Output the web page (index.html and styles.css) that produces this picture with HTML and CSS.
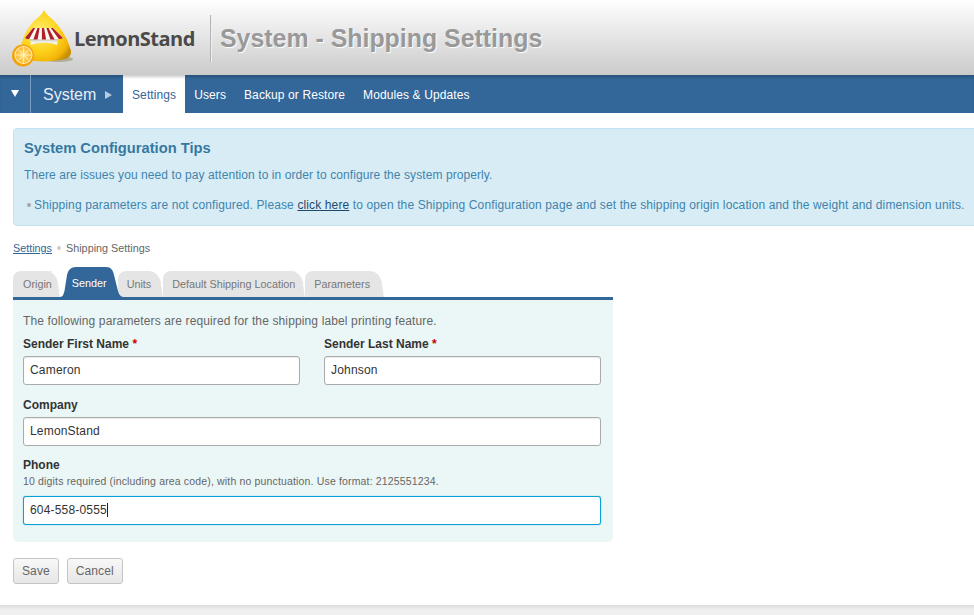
FILE: index.html
```html
<!DOCTYPE html>
<html lang="en">
<head>
  <meta charset="UTF-8">
  <meta name="viewport" content="width=device-width, initial-scale=1.0">
  <title>System - Shipping Settings</title>
  <link rel="stylesheet" href="styles.css">
</head>
<body>

  <div class="header">
    <div class="logo">
      <svg class="logo-icon" width="75" height="68" viewBox="0 3 75 68">
        <defs>
          <radialGradient id="dome" cx="0.38" cy="0.42" r="0.7">
            <stop offset="0" stop-color="#fff06a"/>
            <stop offset="0.55" stop-color="#fdd21c"/>
            <stop offset="0.85" stop-color="#f3b508"/>
            <stop offset="1" stop-color="#c78f04"/>
          </radialGradient>
          <linearGradient id="awning" x1="0" y1="0" x2="0" y2="1">
            <stop offset="0" stop-color="#a9a99c"/>
            <stop offset="0.5" stop-color="#e8e8e0"/>
            <stop offset="1" stop-color="#fff"/>
          </linearGradient>
          <radialGradient id="lemon" cx="0.5" cy="0.5" r="0.55">
            <stop offset="0" stop-color="#ffe48a"/>
            <stop offset="1" stop-color="#f9b72a"/>
          </radialGradient>
        </defs>
        <ellipse cx="58" cy="58" rx="15" ry="3" fill="#8f8a62" opacity="0.55"/>
        <path d="M44 9 C46 14 52 17 56 22 C62 29 68 38 71 50 C71.5 54 69 57 65 58 C52 61 38 61 28 59 C23 58 21 55 21 50 C21 38 27 28 33 21 C37 17 42 14 44 9 Z" fill="url(#dome)"/>
        <path d="M30 37 H58 L57 44 C50 41 38 41 31 44 Z" fill="url(#awning)"/>
        <path d="M33 27 H53 L63 37 C61 39 27 39 25 37 Z" fill="#fbf8ec"/>
        <path d="M33 27 H35.200 L29.200 38 C27.500 38.300 26 38 25 37 Z M37.400 27 H39.600 L37.600 38.500 H33.400 Z M41.900 27 H44.100 L46.100 38.500 H41.900 Z M46.400 27 H48.600 L54.600 38.500 H50.400 Z M50.800 27 H53 L63 37 C62 38 60.500 38.300 58.800 38 Z" fill="#b11f2d"/>
        <circle cx="23" cy="54.500" r="11" fill="#f4a20b"/>
        <circle cx="23.500" cy="54" r="9" fill="#fff3c4"/>
        <circle cx="23.500" cy="54" r="8" fill="url(#lemon)"/>
        <path d="M23.500 46 V62 M15.500 54 H31.500 M17.800 48.300 L29.200 59.700 M29.200 48.300 L17.800 59.700" stroke="#fff3c4" stroke-width="0.8"/>
      </svg>
      <span class="logo-text">LemonStand</span>
    </div>
    <span class="header-sep"></span>
    <h1 class="page-title">System - Shipping Settings</h1>
  </div>

  <div class="nav">
    <a class="nav-toggle"><span class="arrow-down"></span></a>
    <span class="nav-section">System <span class="arrow-right"></span></span>
    <a class="nav-item active">Settings</a>
    <a class="nav-item">Users</a>
    <a class="nav-item">Backup or Restore</a>
    <a class="nav-item">Modules &amp; Updates</a>
  </div>

  <div class="content">
    <div class="tips">
      <h2>System Configuration Tips</h2>
      <p class="tip-intro">There are issues you need to pay attention to in order to configure the system properly.</p>
      <p class="tip-item"><span class="dot"></span>Shipping parameters are not configured. Please <a href="#">click here</a> to open the Shipping Configuration page and set the shipping origin location and the weight and dimension units.</p>
    </div>

    <div class="breadcrumbs">
      <a href="#">Settings</a><span class="dot"></span>Shipping Settings
    </div>

    <div class="tabs">
      <a class="tab tab-origin">Origin</a>
      <a class="tab tab-sender current">
        <svg class="tab-shape" width="64" height="30" viewBox="0 0 64 30">
          <path d="M0 30 C3 30 3.500 27 4.500 24 L7 8 C8 3 11 0 16 0 H46 C51 0 53 3 54 8 L58 24 C59 28 61 30 64 30 Z" fill="#336699"/>
        </svg>
        Sender
      </a>
      <a class="tab tab-units">Units</a>
      <a class="tab tab-location">Default Shipping Location</a>
      <a class="tab tab-params">Parameters</a>
    </div>

    <div class="panel">
      <p class="panel-intro">The following parameters are required for the shipping label printing feature.</p>
      <div class="form-row">
        <div class="field">
          <label>Sender First Name <span class="req">*</span></label>
          <div class="input">Cameron</div>
        </div>
        <div class="field">
          <label>Sender Last Name <span class="req">*</span></label>
          <div class="input">Johnson</div>
        </div>
      </div>
      <div class="field company">
        <label>Company</label>
        <div class="input">LemonStand</div>
      </div>
      <div class="field phone">
        <label>Phone</label>
        <div class="hint">10 digits required (including area code), with no punctuation. Use format: 2125551234.</div>
        <div class="input focused">604-558-0555<span class="caret"></span></div>
      </div>
    </div>

    <div class="buttons">
      <button>Save</button>
      <button>Cancel</button>
    </div>
  </div>

  <div class="footer"></div>

</body>
</html>
```

FILE: styles.css
```css
html, body {
  height: 615px;
  overflow: hidden;
}

body {
  margin: 0;
  background-color: #fff;
  font-family: "Liberation Sans", Arial, sans-serif;
  font-size: 12px;
  color: #666;
}

/* header */

.header {
  height: 75px;
  display: flex;
  align-items: center;
  background: linear-gradient(#fff, #f4f4f4 20%, #cbcbcb);
}

.logo {
  width: 210px;
  display: flex;
  align-items: center;
}

.logo-icon {
  flex: none;
}

.logo-text {
  margin: 2px 0 0 -1px;
  font-family: "Open Sans", sans-serif;
  font-size: 20px;
  font-weight: 700;
  letter-spacing: -0.5px;
  color: #4a4a4a;
}

.header-sep {
  width: 1px;
  height: 47px;
  margin-top: 1px;
  background-color: #b5b5b5;
  box-shadow: 1px 0 0 #eee;
}

.page-title {
  margin: 2px 0 0 9px;
  font-size: 24.9px;
  font-weight: bold;
  color: #999;
  text-shadow: 1px 1px 1px #fff;
}

/* nav */

.nav {
  height: 38px;
  display: flex;
  align-items: stretch;
  background-color: #336699;
  box-shadow: inset 0 3px 3px -1px rgba(0, 0, 0, 0.2);
  color: #fff;
}

.nav-toggle {
  width: 30px;
  border-right: 1px solid #7a9cc0;
  display: flex;
  align-items: center;
  justify-content: center;
}

.arrow-down {
  width: 0;
  height: 0;
  border-left: 4px solid transparent;
  border-right: 4px solid transparent;
  border-top: 7px solid #fff;
  margin-bottom: 2px;
}

.nav-section {
  width: 92px;
  box-sizing: border-box;
  display: flex;
  align-items: center;
  padding: 1px 0 0 12px;
  font-size: 16px;
  color: #e8eef5;
}

.arrow-right {
  width: 0;
  height: 0;
  margin-left: 9px;
  border-top: 4px solid transparent;
  border-bottom: 4px solid transparent;
  border-left: 7px solid #b7cbe0;
}

.nav-item {
  display: flex;
  align-items: center;
  padding: 2px 9px 0;
  letter-spacing: 0.1px;
}

.nav-item.active {
  background-color: #fff;
  box-shadow: inset 0 4px 3px -2px rgba(0, 0, 0, 0.2);
  color: #336699;
}

/* content */

.content {
  padding: 15px 13px 0;
}

.tips {
  height: 96px;
  margin-right: -30px;
  background-color: #d8ecf6;
  border: 1px solid #bfe3f0;
  border-radius: 4px;
  padding: 0 10px;
  color: #3f84ac;
}

.tips h2 {
  margin: 10px 0 0;
  font-size: 14.7px;
  line-height: 18px;
  color: #36789f;
}

.tips p {
  line-height: 15px;
}

.tip-intro {
  margin: 11px 0 0;
  letter-spacing: 0.08px;
}

.tips .tip-item {
  margin: 15px 0 0;
  letter-spacing: 0.125px;
}

.tips a {
  color: #1f4a6b;
}

.dot {
  display: inline-block;
  width: 4px;
  height: 4px;
  border-radius: 50%;
  background-color: #a5a5a5;
  vertical-align: 2px;
  margin: 0 3px;
}

.breadcrumbs {
  margin-top: 15px;
  font-size: 10.8px;
  line-height: 14px;
}

.breadcrumbs a {
  color: #336699;
}

.breadcrumbs .dot {
  background-color: #ccc;
  margin: 0 5px;
}

/* tabs */

.tabs {
  margin-top: 12px;
  height: 30px;
  display: flex;
  align-items: flex-end;
}

.tab {
  position: relative;
  height: 26px;
  line-height: 27px;
  font-size: 10.8px;
  color: #777;
  background-color: #e5e5e5;
  background-clip: content-box;
}

.tab::before,
.tab::after {
  content: "";
  position: absolute;
  z-index: -1;
  top: 0;
  bottom: 0;
  width: 14px;
  background-color: #e5e5e5;
}

.tab::before {
  left: 0;
  border-radius: 8px 0 0 0;
}

.tab::after {
  right: 1px;
  border-right: 1.5px solid #fff;
  border-radius: 0 11px 0 0;
  transform: skewX(8deg);
}

.tab-origin {
  z-index: 5;
  padding: 0 8px 0 10px;
}

.tab-sender {
  z-index: 6;
  padding: 0 11px 0 12px;
}

.tab-units {
  z-index: 4;
  padding: 0 12px 0 9px;
}

.tab-location {
  z-index: 3;
  padding: 0 10px 0 9px;
}

.tab-params {
  z-index: 2;
  padding: 0 14px 0 9px;
}

.tab.current {
  height: 30px;
  line-height: 33px;
  background: none;
  color: #fff;
}

.tab.current::before,
.tab.current::after {
  display: none;
}

.tab-shape {
  position: absolute;
  z-index: -1;
  top: 0;
  left: 0;
}

.panel {
  width: 578px;
  height: 242px;
  padding: 0 12px 0 10px;
  border-top: 3px solid #336699;
  border-radius: 0 0 5px 5px;
  background-color: #ebf7f7;
}

.panel-intro {
  margin: 0;
  padding-top: 14px;
  line-height: 15px;
  letter-spacing: 0.13px;
}

.form-row {
  display: flex;
  gap: 24px;
  margin-top: 8px;
}

.form-row .field {
  flex: 1;
}

.field label {
  display: block;
  font-weight: bold;
  color: #333;
  line-height: 15px;
}

.req {
  color: #c00;
}

.input {
  height: 27px;
  line-height: 27px;
  margin-top: 4px;
  padding: 0 6px;
  background-color: #fff;
  border: 1px solid #aaa;
  border-radius: 3px;
  box-shadow: inset 0 1px 1px rgba(0, 0, 0, 0.08);
  color: #333;
  letter-spacing: 0.18px;
}

.company {
  margin-top: 13px;
}

.phone {
  margin-top: 12px;
}

.hint {
  font-size: 10.5px;
  line-height: 14px;
  margin-top: 1px;
  letter-spacing: 0.16px;
}

.phone .input {
  margin-top: 8px;
}

.input.focused {
  border-color: #0aa0d8;
  box-shadow: 0 0 1px #0aa0d8;
}

.caret {
  display: inline-block;
  width: 1px;
  height: 14px;
  background-color: #222;
  vertical-align: -3px;
}

/* buttons */

.buttons {
  margin-top: 16px;
  display: flex;
  gap: 8px;
}

button {
  height: 26px;
  padding: 0 8px;
  font-family: inherit;
  font-size: 12px;
  letter-spacing: 0.1px;
  color: #666;
  background: linear-gradient(#f8f8f8, #e6e6e6);
  border: 1px solid #c4c4c4;
  border-radius: 3px;
}

.footer {
  margin-top: 21px;
  height: 20px;
  background: linear-gradient(#dcdcdc, #f0f0f0 5px);
}
```
